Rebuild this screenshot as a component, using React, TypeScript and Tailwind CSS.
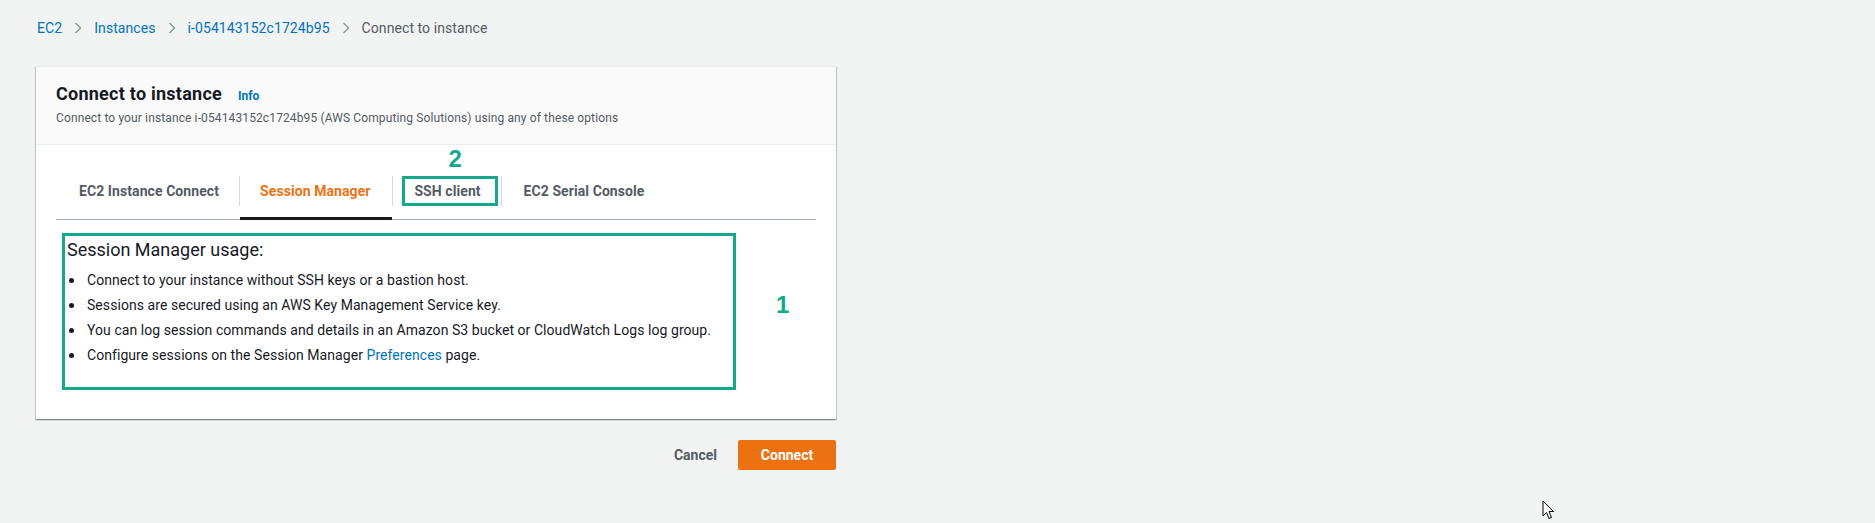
import React from 'react';

const crumbs = ['EC2', 'Instances', 'i-054143152c1724b95'];

const bullets = [
  'Connect to your instance without SSH keys or a bastion host.',
  'Sessions are secured using an AWS Key Management Service key.',
  'You can log session commands and details in an Amazon S3 bucket or CloudWatch Logs log group.',
];

const Chevron = () => (
  <svg width="8" height="12" viewBox="0 0 8 12" className="mx-3 shrink-0">
    <polyline points="1.5,1 6.5,6 1.5,11" fill="none" stroke="#879596" strokeWidth="1.4" />
  </svg>
);

const Separator = () => <div className="h-[30px] w-px bg-[#d5dbdb]" />;

const Bullet = () => (
  <span className="flex h-[20px] w-[18px] shrink-0 items-center">
    <span className="mt-[1px] h-[5px] w-[5px] rounded-full bg-[#16191f]" />
  </span>
);

const Breadcrumbs = () => (
  <nav className="flex items-center pl-[37px] pt-[18px] text-[14px] leading-[20px] tracking-[0.08px]">
    {crumbs.map((c) => (
      <React.Fragment key={c}>
        <a className="text-[#0073bb]">{c}</a>
        <Chevron />
      </React.Fragment>
    ))}
    <span className="text-[#545b64]">Connect to instance</span>
  </nav>
);

const Tabs = () => (
  <div className="flex h-[58px] items-stretch border-b border-[#aab7b8] pl-[3px] text-[14px] font-bold tracking-[0.08px]">
    <div className="flex items-center px-5 pt-[2px] text-[#545b64]">EC2 Instance Connect</div>
    <div className="flex items-center">
      <Separator />
    </div>
    <div className="relative flex items-center pl-5 pr-[21px] pt-[2px] text-[#ec7211]">
      Session Manager
      <div className="absolute bottom-[-1px] left-0 right-0 h-[3px] bg-[#16191f]" />
    </div>
    <div className="flex items-center">
      <Separator />
    </div>
    <div className="flex items-center pl-[9px] pr-[3px]">
      <div className="relative flex h-[30px] w-[96px] items-center justify-center border-[3px] border-[#13a98b] pr-1 pt-[2px] text-[#545b64]">
        SSH client
        <span className="absolute left-[44px] top-[-32px] font-['Liberation_Sans',sans-serif] text-[24px] font-bold leading-none tracking-normal text-[#13a98b]">
          2
        </span>
      </div>
    </div>
    <div className="flex items-center">
      <Separator />
    </div>
    <div className="flex items-center pl-[22px] pr-5 pt-[2px] text-[#545b64]">
      EC2 Serial Console
    </div>
  </div>
);

const Cursor = () => (
  <svg
    width="13"
    height="20"
    viewBox="0 0 13 20"
    className="absolute left-[1542px] top-[500px]"
  >
    <path
      d="M1 1 L1 16 L4.5 12.5 L7 18.5 L9.5 17.5 L7 11.5 L11.5 11.5 Z"
      fill="#ffffff"
      stroke="#000000"
      strokeWidth="1"
      strokeLinejoin="round"
    />
  </svg>
);

export default function App() {
  return (
    <div className="relative min-h-[523px] bg-[#f2f3f3] font-['Roboto',sans-serif] text-[#16191f]">
      <Breadcrumbs />

      <div className="ml-[36px] mt-[28px] w-[800px] border-t border-[#eaeded] bg-white shadow-[0_1px_1px_0_rgba(0,28,36,0.3),1px_1px_1px_0_rgba(0,28,36,0.15),-1px_1px_1px_0_rgba(0,28,36,0.15)]">
        <div className="h-[78px] border-b border-[#eaeded] bg-[#fafafa] px-5 pt-[16px]">
          <div className="flex items-baseline">
            <h2 className="text-[18px] font-bold leading-[22px] tracking-[0.25px] text-[#16191f]">
              Connect to instance
            </h2>
            <a className="ml-[16px] text-[12px] font-bold text-[#0073bb]">Info</a>
          </div>
          <p className="mt-[5px] text-[12px] leading-[16px] tracking-[0.12px] text-[#545b64]">
            Connect to your instance i-054143152c1724b95 (AWS Computing Solutions) using
            any of these options
          </p>
        </div>

        <div className="px-5 pb-[29px] pt-[17px]">
          <Tabs />

          <div className="mt-[13px] flex items-start">
            <div className="ml-[6px] h-[157px] w-[674px] border-[3px] border-[#13a98b] pl-[2px] pt-[3px]">
              <h3 className="text-[18px] leading-[22px] text-[#16191f]">
                Session Manager usage:
              </h3>
              <ul className="mt-[9px] flex flex-col gap-[5px] pl-[2px] text-[14px] leading-[20px] tracking-[0.06px]">
                {bullets.map((b) => (
                  <li key={b} className="flex">
                    <Bullet />
                    <span>{b}</span>
                  </li>
                ))}
                <li className="flex">
                  <Bullet />
                  <span>
                    Configure sessions on the Session Manager{' '}
                    <a className="text-[#0073bb]">Preferences</a> page.
                  </span>
                </li>
              </ul>
            </div>
            <span className="ml-[40px] mt-[60px] font-['Liberation_Sans',sans-serif] text-[24px] font-bold leading-none text-[#13a98b]">
              1
            </span>
          </div>
        </div>
      </div>

      <div className="ml-[36px] mt-[21px] flex w-[800px] items-center justify-end gap-[21px]">
        <button className="text-[14px] font-bold text-[#545b64]">Cancel</button>
        <button className="h-[30px] w-[98px] rounded-[2px] bg-[#ec7211] text-[14px] font-bold text-white">
          Connect
        </button>
      </div>

      <Cursor />
    </div>
  );
}
